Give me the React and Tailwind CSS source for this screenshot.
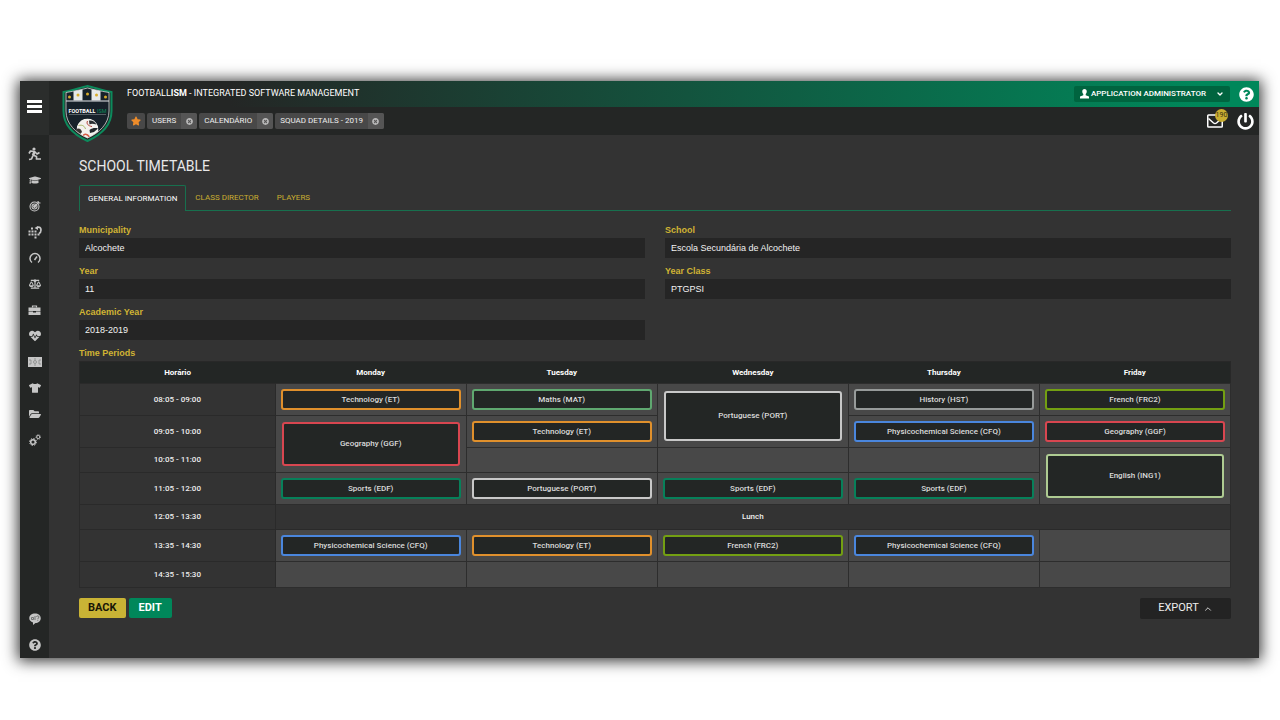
// src/pages/SchoolTimetable/index.jsx
import { useState } from 'react';
import {
  FaGraduationCap,
  FaBalanceScale,
  FaHeartbeat,
  FaTshirt,
  FaFolderOpen,
  FaQuestionCircle,
  FaPowerOff,
  FaStar,
  FaTimesCircle,
} from 'react-icons/fa';
import { ChevronDown, ChevronUp } from 'lucide-react';

const MenuIcon = () => (
  <svg viewBox="0 0 15 13" className="h-[13px] w-[15px]" fill="currentColor">
    <rect width="15" height="3" />
    <rect y="5" width="15" height="3" />
    <rect y="10" width="15" height="3" />
  </svg>
);

const RunnerIcon = () => (
  <svg viewBox="0 0 28 28" className="size-3.5" fill="none" stroke="currentColor" strokeWidth="3.4" strokeLinejoin="round">
    <circle cx="12" cy="4" r="3.2" fill="currentColor" stroke="none" />
    <path d="M2 13 5 8l8 1 5 5 5-3" />
    <path d="m13 9-3 8" strokeWidth="5" />
    <path d="m10 16 7 3v5h9" />
    <path d="m10 17-3 7-5 1" />
  </svg>
);

const TargetIcon = () => (
  <svg viewBox="0 0 24 24" className="size-3" fill="none" stroke="currentColor" strokeWidth="2.2">
    <circle cx="11" cy="13" r="9" />
    <circle cx="11" cy="13" r="5" />
    <circle cx="11" cy="13" r="1.8" fill="currentColor" />
    <path d="M11 13 20 4M18 2v4h5" />
  </svg>
);

const TacticsIcon = () => (
  <svg viewBox="0 0 28 26" className="h-[13px] w-[14px]" fill="currentColor">
    <rect x="6" y="3" width="4" height="4" />
    <rect x="1" y="9" width="4" height="4" />
    <rect x="7" y="9" width="4" height="4" />
    <rect x="13" y="9" width="4" height="4" />
    <rect x="1" y="15" width="4" height="4" />
    <rect x="7" y="15" width="4" height="4" />
    <rect x="13" y="15" width="4" height="4" />
    <rect x="19" y="15" width="4" height="4" />
    <rect x="13" y="21" width="4" height="4" />
    <path d="M18 3c5-2 8 0 8 5 0 4-2 6-4 7" fill="none" stroke="currentColor" strokeWidth="3.4" />
    <path d="m13 4 7-4v8z" />
  </svg>
);

const GaugeIcon = () => (
  <svg viewBox="0 0 24 24" className="size-3" fill="none" stroke="currentColor" strokeWidth="3">
    <path d="M6 21a10 10 0 1 1 12 0" />
    <path d="m11 16 5-7" />
  </svg>
);

const BriefcaseIcon = () => (
  <svg viewBox="0 0 26 22" className="h-[11px] w-[13px]" fill="currentColor">
    <path d="M9 5V2h8v3" fill="none" stroke="currentColor" strokeWidth="2.4" />
    <path d="M1 5h24v7H1zM1 13h9v2h6v-2h9v7H1z" />
  </svg>
);

const PitchIcon = () => (
  <svg viewBox="0 0 28 20" className="h-[10px] w-[14px]">
    <rect width="28" height="20" fill="currentColor" />
    <g fill="none" stroke="#7d7f7e" strokeWidth="1.4">
      <path d="M2 6h4v8H2M26 6h-4v8h4M14 2v4M14 14v4" />
      <circle cx="14" cy="10" r="3" />
    </g>
  </svg>
);

const GearsIcon = () => (
  <svg viewBox="0 0 24 24" className="size-3" fill="none" stroke="currentColor">
    <circle cx="8" cy="16" r="4.6" strokeWidth="3" />
    <circle cx="8" cy="16" r="7" strokeWidth="2" strokeDasharray="2.7 2.8" />
    <circle cx="18.5" cy="6" r="3.2" strokeWidth="2" />
    <circle cx="18.5" cy="6" r="4.8" strokeWidth="1.6" strokeDasharray="1.8 1.97" />
  </svg>
);

const FeedbackIcon = () => (
  <svg viewBox="0 0 24 24" className="size-3">
    <path d="M12 1c6.500 0 11.500 4 11.500 9.500S18.500 20 13 20l-5 4v-5C3.500 17.500.5 14.500.5 10.500.5 5 5.500 1 12 1z" fill="currentColor" />
    <g fill="none" stroke="#6a6c6b" strokeWidth="1.8">
      <path d="M5 9h4v4H5zM15 8c0-3 5-3 5 0 0 2-2.500 2-2.500 4M17.500 13.500v2" />
      <path d="M12 6v8" />
    </g>
  </svg>
);

const UserIcon = () => (
  <svg viewBox="0 0 20 22" className="h-[10px] w-[9px]" fill="currentColor">
    <path d="M10 0c3.300 0 5 2.300 5 5.500 0 2.500-1 4.500-2.300 5.700v2.300L20 16.500V21H0v-4.500l7.300-3v-2.300C6 10 5 8 5 5.500 5 2.300 6.700 0 10 0z" />
  </svg>
);

const MailIcon = () => (
  <svg viewBox="0 0 32 28" className="h-[14px] w-4" fill="none" stroke="currentColor" strokeWidth="3">
    <rect x="1.500" y="2" width="29" height="24" rx="1.500" />
    <path d="m3 9 10 9c2 1.500 4 1.500 6 0l10-9" />
  </svg>
);

const Logo = () => (
  <svg viewBox="0 0 102 114" className="h-[57px] w-[51px]">
    <defs>
      <clipPath id="shield">
        <path d="M8 15C26 12 40 9 51 6c11 3 25 6 43 9v37c0 26-20 44-43 54C28 96 8 78 8 52z" />
      </clipPath>
      <clipPath id="ball">
        <circle cx="51" cy="89" r="22" />
      </clipPath>
    </defs>
    <path
      d="M3 14C22 11 36 5 51 2c15 3 29 9 48 12v38c0 29-22 48-48 60C25 100 3 81 3 52z"
      fill="#222827"
      stroke="#0c8a5c"
      strokeWidth="4"
    />
    <g clipPath="url(#shield)">
      <rect width="102" height="114" fill="#17212a" />
      <rect x="23" width="18" height="31" fill="#e6e8e9" />
      <rect x="59" width="18" height="31" fill="#e6e8e9" />
      <rect y="31" width="102" height="2" fill="#e6e8e9" />
      <g fill="#d8ac2c">
        <circle cx="15" cy="24" r="3" />
        <circle cx="32" cy="20" r="3" />
        <circle cx="51" cy="18" r="3" />
        <circle cx="69" cy="20" r="3" />
        <circle cx="87" cy="24" r="3" />
      </g>
      <rect x="14" y="58" width="74" height="1.500" fill="#6c757a" />
      <g clipPath="url(#ball)">
        <circle cx="51" cy="89" r="22" fill="#f3f1ee" />
        <path d="M28 88c7-3 11 1 12 6l-6 7-8-8z" fill="#3a3330" />
        <path d="M54 71c8-1 12 3 15 8-7-2-11-2-14 0z" fill="#2a2e31" />
        <path d="M55 90c6-4 11-5 17-3l-8 7-8 2z" fill="#22272a" />
        <path d="M33 81c8-2 12 1 14 7" fill="none" stroke="#a9b86b" strokeWidth="2" />
        <path d="M51 72c-3 6 2 10 9 11" fill="none" stroke="#b0453c" strokeWidth="2" />
        <path d="M41 104c3-8 9-7 14 0" fill="none" stroke="#d65b45" strokeWidth="3" />
      </g>
    </g>
    <path
      d="M8 15C26 12 40 9 51 6c11 3 25 6 43 9v37c0 26-20 44-43 54C28 96 8 78 8 52z"
      fill="none"
      stroke="#dfe3e2"
      strokeWidth="1.500"
    />
    <text x="51" y="55" textAnchor="middle" fontFamily="Roboto, sans-serif" fontSize="11" fontWeight="700" fill="#ffffff">
      FOOTBALL <tspan fill="#0c8a5c" fontWeight="400">ISM</tspan>
    </text>
  </svg>
);

const menuItems = [
  { label: 'Players', icon: <RunnerIcon /> },
  { label: 'School', icon: <FaGraduationCap /> },
  { label: 'Objectives', icon: <TargetIcon /> },
  { label: 'Tactics', icon: <TacticsIcon /> },
  { label: 'Performance', icon: <GaugeIcon /> },
  { label: 'Discipline', icon: <FaBalanceScale /> },
  { label: 'Management', icon: <BriefcaseIcon /> },
  { label: 'Medical', icon: <FaHeartbeat /> },
  { label: 'Matches', icon: <PitchIcon /> },
  { label: 'Equipment', icon: <FaTshirt /> },
  { label: 'Documents', icon: <FaFolderOpen /> },
  { label: 'Settings', icon: <GearsIcon /> },
];

const bottomItems = [
  { label: 'Feedback', icon: <FeedbackIcon /> },
  { label: 'Help', icon: <FaQuestionCircle /> },
];

const openPages = ['USERS', 'CALENDÁRIO', 'SQUAD DETAILS - 2019'];

const tabs = ['GENERAL INFORMATION', 'CLASS DIRECTOR', 'PLAYERS'];

const fields = [
  { id: 'municipality', label: 'Municipality', value: 'Alcochete' },
  { id: 'school', label: 'School', value: 'Escola Secundária de Alcochete' },
  { id: 'year', label: 'Year', value: '11' },
  { id: 'year-class', label: 'Year Class', value: 'PTGPSI' },
  { id: 'academic-year', label: 'Academic Year', value: '2018-2019' },
];

const days = ['Monday', 'Tuesday', 'Wednesday', 'Thursday', 'Friday'];

const subjects = {
  ET: { name: 'Technology (ET)', border: 'border-[#e0902c]' },
  MAT: { name: 'Maths (MAT)', border: 'border-[#5fa870]' },
  PORT: { name: 'Portuguese (PORT)', border: 'border-[#c8c8c8]' },
  HST: { name: 'History (HST)', border: 'border-[#979b9a]' },
  FRC2: { name: 'French (FRC2)', border: 'border-[#739f12]' },
  CFQ: { name: 'Physicochemical Science (CFQ)', border: 'border-[#4a86dd]' },
  GGF: { name: 'Geography (GGF)', border: 'border-[#d84650]' },
  EDF: { name: 'Sports (EDF)', border: 'border-[#07805a]' },
  ING1: { name: 'English (ING1)', border: 'border-[#aecb92]' },
};

// null = free period; days covered by a longer lesson above are left out
const rows = [
  {
    time: '08:05 - 09:00',
    height: 'h-8',
    cells: [{ code: 'ET' }, { code: 'MAT' }, { code: 'PORT', span: 2, size: 'h-[50px]' }, { code: 'HST' }, { code: 'FRC2' }],
  },
  {
    time: '09:05 - 10:00',
    height: 'h-8',
    cells: [{ code: 'GGF', span: 2, size: 'h-11' }, { code: 'ET' }, { code: 'CFQ' }, { code: 'GGF' }],
  },
  {
    time: '10:05 - 11:00',
    height: 'h-[25px]',
    cells: [null, null, null, { code: 'ING1', span: 2, size: 'h-11' }],
  },
  {
    time: '11:05 - 12:00',
    height: 'h-8',
    cells: [{ code: 'EDF' }, { code: 'PORT' }, { code: 'EDF' }, { code: 'EDF' }],
  },
  { time: '12:05 - 13:30', height: 'h-[25px]', lunch: true },
  {
    time: '13:35 - 14:30',
    height: 'h-8',
    cells: [{ code: 'CFQ' }, { code: 'ET' }, { code: 'FRC2' }, { code: 'CFQ' }, null],
  },
  {
    time: '14:35 - 15:30',
    height: 'h-[26px]',
    cells: [null, null, null, null, null],
  },
];

const MenuLink = ({ item }) => (
  <a
    href="#"
    aria-label={item.label}
    className="flex h-[26px] items-center justify-center text-[12px] text-[#c6c6c6] hover:text-white"
  >
    {item.icon}
  </a>
);

const LessonCell = ({ cell }) => {
  if (!cell) {
    return <td className="border border-[#2d2d2d] bg-[#484848]"></td>;
  }

  const subject = subjects[cell.code];

  return (
    <td
      rowSpan={cell.span || 1}
      className={`border border-[#2d2d2d] bg-[#484848] ${cell.span ? 'px-1.5' : 'px-[5px]'}`}
    >
      <div
        className={`flex items-center justify-center rounded-[3px] border-2 bg-[#232625] text-[8px] font-medium text-[#dcdcdc] ${subject.border} ${cell.size || 'h-[21px]'}`}
      >
        {subject.name}
      </div>
    </td>
  );
};

const SchoolTimetable = () => {
  const [activeTab, setActiveTab] = useState('GENERAL INFORMATION');

  return (
    <div className="flex min-h-screen bg-white pt-[81px] pr-[21px] pb-[62px] pl-5 font-['Roboto',sans-serif]">
      <div className="flex min-w-0 flex-1 bg-[#333333] shadow-[0_1px_14px_2px_rgba(0,0,0,0.8)]">
        {/* Sidebar */}
        <nav className="flex w-[29px] shrink-0 flex-col bg-[#242625]">
          <button aria-label="Menu" className="flex h-[54px] items-center justify-center bg-[#2b2d2c] pb-1 text-white">
            <MenuIcon />
          </button>
          <div className="pt-1.5">
            {menuItems.map((item) => (
              <MenuLink key={item.label} item={item} />
            ))}
          </div>
          <div className="mt-auto">
            {bottomItems.map((item) => (
              <MenuLink key={item.label} item={item} />
            ))}
          </div>
        </nav>

        <div className="flex min-w-0 flex-1 flex-col">
          {/* Header */}
          <header className="relative">
            <a href="#" aria-label="Footballism" className="absolute top-1 left-[13px] z-10">
              <Logo />
            </a>
            <div className="flex h-[26px] items-center bg-linear-to-r/srgb from-[#242625] from-15% to-[#00875a] to-95% pr-[5px] pl-[78px]">
              <h1 className="text-[9px] text-white">
                FOOTBALL<b className="font-bold">ISM</b> - INTEGRATED SOFTWARE MANAGEMENT
              </h1>
              <button className="ml-auto flex h-4 items-center rounded-xs bg-[#00643f] px-1.5 text-[8px] font-medium text-white">
                <UserIcon />
                <span className="ml-0.5">APPLICATION ADMINISTRATOR</span>
                <ChevronDown className="ml-2.5 size-2" strokeWidth={4} />
              </button>
              <button aria-label="Help" className="ml-[9px] text-[15px] text-white">
                <FaQuestionCircle />
              </button>
            </div>
            <div className="flex h-7 items-center gap-0.5 bg-[#242625] pr-[5px] pl-[78px]">
              <button aria-label="Favourites" className="flex h-4 w-[18px] items-center justify-center rounded-xs bg-[#484848] text-[10px] text-[#ee8c2a]">
                <FaStar />
              </button>
              {openPages.map((page) => (
                <div key={page} className="flex h-4 rounded-xs bg-[#484848] text-[8px] text-[#eeeeee]">
                  <a href="#" className="flex items-center px-[5px]">{page}</a>
                  <button aria-label={`Close ${page}`} className="flex w-4 items-center justify-center rounded-r-xs bg-[#555555] text-[7px] text-[#b8b8b8]">
                    <FaTimesCircle />
                  </button>
                </div>
              ))}
              <button aria-label="Messages" className="relative ml-auto text-white">
                <MailIcon />
                <span className="absolute -top-[5px] -right-[5px] flex size-[13px] items-center justify-center rounded-full bg-[#c9ae31] text-[7px] text-[#3b3413]">
                  190
                </span>
              </button>
              <button aria-label="Log out" className="ml-3 text-[17px] text-white">
                <FaPowerOff />
              </button>
            </div>
          </header>

          <main className="pt-[23px] pr-7 pl-[30px]">
            <h2 className="text-[14px] leading-4 text-[#e8e8e8]">SCHOOL TIMETABLE</h2>

            {/* Tabs */}
            <div role="tablist" className="mt-[11px] flex h-[26px] text-[8px]">
              {tabs.map((tab) => (
                <button
                  key={tab}
                  role="tab"
                  aria-selected={tab === activeTab}
                  onClick={() => setActiveTab(tab)}
                  className={
                    tab === activeTab
                      ? 'rounded-t-xs border border-b-0 border-[#17704e] px-2 text-white'
                      : 'border-b border-[#17704e] px-[9px] text-[#c9ae31]'
                  }
                >
                  {tab}
                </button>
              ))}
              <div className="flex-1 border-b border-[#17704e]"></div>
            </div>

            {/* Class details */}
            <div className="mt-3.5 grid grid-cols-2 gap-x-5 gap-y-2 font-['Liberation_Sans',sans-serif]">
              {fields.map((field) => (
                <div key={field.id}>
                  <label htmlFor={field.id} className="block h-[13px] text-[9px] leading-[11px] font-bold text-[#d0b433]">
                    {field.label}
                  </label>
                  <input
                    id={field.id}
                    readOnly
                    value={field.value}
                    className="block h-5 w-full bg-[#252525] px-1.5 text-[9px] text-[#f2f2f2]"
                  />
                </div>
              ))}
            </div>

            {/* Timetable */}
            <h3 className="mt-2 h-[13px] font-['Liberation_Sans',sans-serif] text-[9px] leading-[11px] font-bold text-[#d0b433]">
              Time Periods
            </h3>
            <table className="w-full table-fixed border-collapse border border-[#282828] text-center text-[8px]">
              <thead>
                <tr className="h-[22px] bg-[#232625] font-bold text-white">
                  <th className="w-[17%]">Horário</th>
                  {days.map((day) => (
                    <th key={day}>{day}</th>
                  ))}
                </tr>
              </thead>
              <tbody>
                {rows.map((row) => (
                  <tr key={row.time} className={row.height}>
                    <th scope="row" className="border border-[#2a2a2a] font-medium text-[#eeeeee]">
                      {row.time}
                    </th>
                    {row.lunch ? (
                      <td colSpan={5} className="border border-[#2a2a2a] font-medium text-[#eeeeee]">
                        Lunch
                      </td>
                    ) : (
                      row.cells.map((cell, index) => <LessonCell key={index} cell={cell} />)
                    )}
                  </tr>
                ))}
              </tbody>
            </table>

            {/* Actions */}
            <div className="mt-2.5 flex items-start gap-[3px] text-[11px]">
              <button className="h-5 rounded-xs bg-[#c9b335] px-[9px] font-bold text-[#191707]">BACK</button>
              <button className="h-5 rounded-xs bg-[#00875a] px-2.5 font-bold text-white">EDIT</button>
              <button className="ml-auto flex h-[21px] w-[91px] items-center justify-center gap-1 rounded-xs bg-[#232323] text-[#ededed]">
                EXPORT
                <ChevronUp className="size-2.5" strokeWidth={2} />
              </button>
            </div>
          </main>
        </div>
      </div>
    </div>
  );
};

export default SchoolTimetable;
